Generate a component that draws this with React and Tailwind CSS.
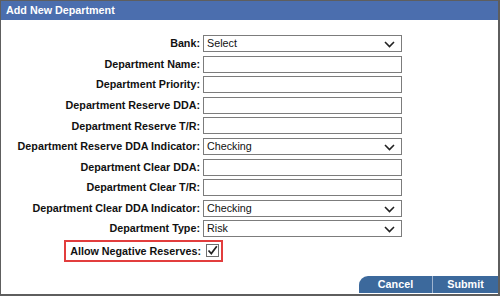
import React from "react";

function Chevron() {
  return (
    <svg width="11" height="7" viewBox="0 0 11 7" className="absolute right-[6px] top-[5px]">
      <polyline points="1,1 5.5,5.5 10,1" fill="none" stroke="#222" strokeWidth="1.6" />
    </svg>
  );
}

function TextBox() {
  return <div className="h-[17px] w-[199px] border border-[#7c7c7c] bg-white" />;
}

function SelectBox({ value }) {
  return (
    <div className="relative h-[17px] w-[199px] border border-[#7c7c7c] bg-white flex items-center pl-[3px] text-[10.75px] text-[#111] leading-none">
      {value}
      <Chevron />
    </div>
  );
}

const rows = [
  ["Bank:", "select", "Select"],
  ["Department Name:", "text"],
  ["Department Priority:", "text"],
  ["Department Reserve DDA:", "text"],
  ["Department Reserve T/R:", "text"],
  ["Department Reserve DDA Indicator:", "select", "Checking"],
  ["Department Clear DDA:", "text"],
  ["Department Clear T/R:", "text"],
  ["Department Clear DDA Indicator:", "select", "Checking"],
  ["Department Type:", "select", "Risk"],
];

export default function App() {
  return (
    <div className="w-[500px] h-[296px] bg-white border-l border-t border-r-2 border-b-2 border-[#5e5e5e] flex flex-col font-['Liberation_Sans',Arial,sans-serif] overflow-hidden">
      <div className="h-[19px] bg-[#4b6eae] flex items-center px-[5px] text-white font-bold text-[10.75px] leading-none">
        Add New Department
      </div>
      <div className="pt-[15px] grid grid-cols-[199px_199px] gap-x-[3px] gap-y-[3.6px]">
        {rows.map(([label, kind, val]) => (
          <React.Fragment key={label}>
            <div className="h-[17px] flex items-center justify-end text-[10.75px] font-bold text-[#111] leading-none whitespace-nowrap">
              {label}
            </div>
            {kind === "select" ? <SelectBox value={val} /> : <TextBox />}
          </React.Fragment>
        ))}
        <div className="col-span-2 -mt-[1px] ml-[63px] w-[159px] h-[22px] border-2 border-[#e23d3d] flex items-center justify-end pr-[2px]">
          <span className="text-[10.75px] font-bold text-[#111] leading-none whitespace-nowrap">
            Allow Negative Reserves:
          </span>
          <span className="ml-[5px] w-[13px] h-[13px] border border-[#6e6e6e] bg-white flex items-center justify-center">
            <svg width="11" height="11" viewBox="0 0 11 11">
              <polyline points="1.5,5.5 4.3,8.6 9.8,1.2" fill="none" stroke="#222" strokeWidth="1.7" />
            </svg>
          </span>
        </div>
      </div>
      <div className="flex-1" />
      <div className="flex justify-end pb-[1px]">
        <div className="h-[17px] w-[73px] bg-[#3c699c] rounded-tl-[9px] flex items-center justify-center text-white font-bold text-[10.75px] leading-none">
          Cancel
        </div>
        <div className="w-[1px] h-[17px] bg-[#9fb4cf]" />
        <div className="h-[17px] w-[65px] bg-[#3c699c] flex items-center justify-center text-white font-bold text-[10.75px] leading-none">
          Submit
        </div>
      </div>
    </div>
  );
}
